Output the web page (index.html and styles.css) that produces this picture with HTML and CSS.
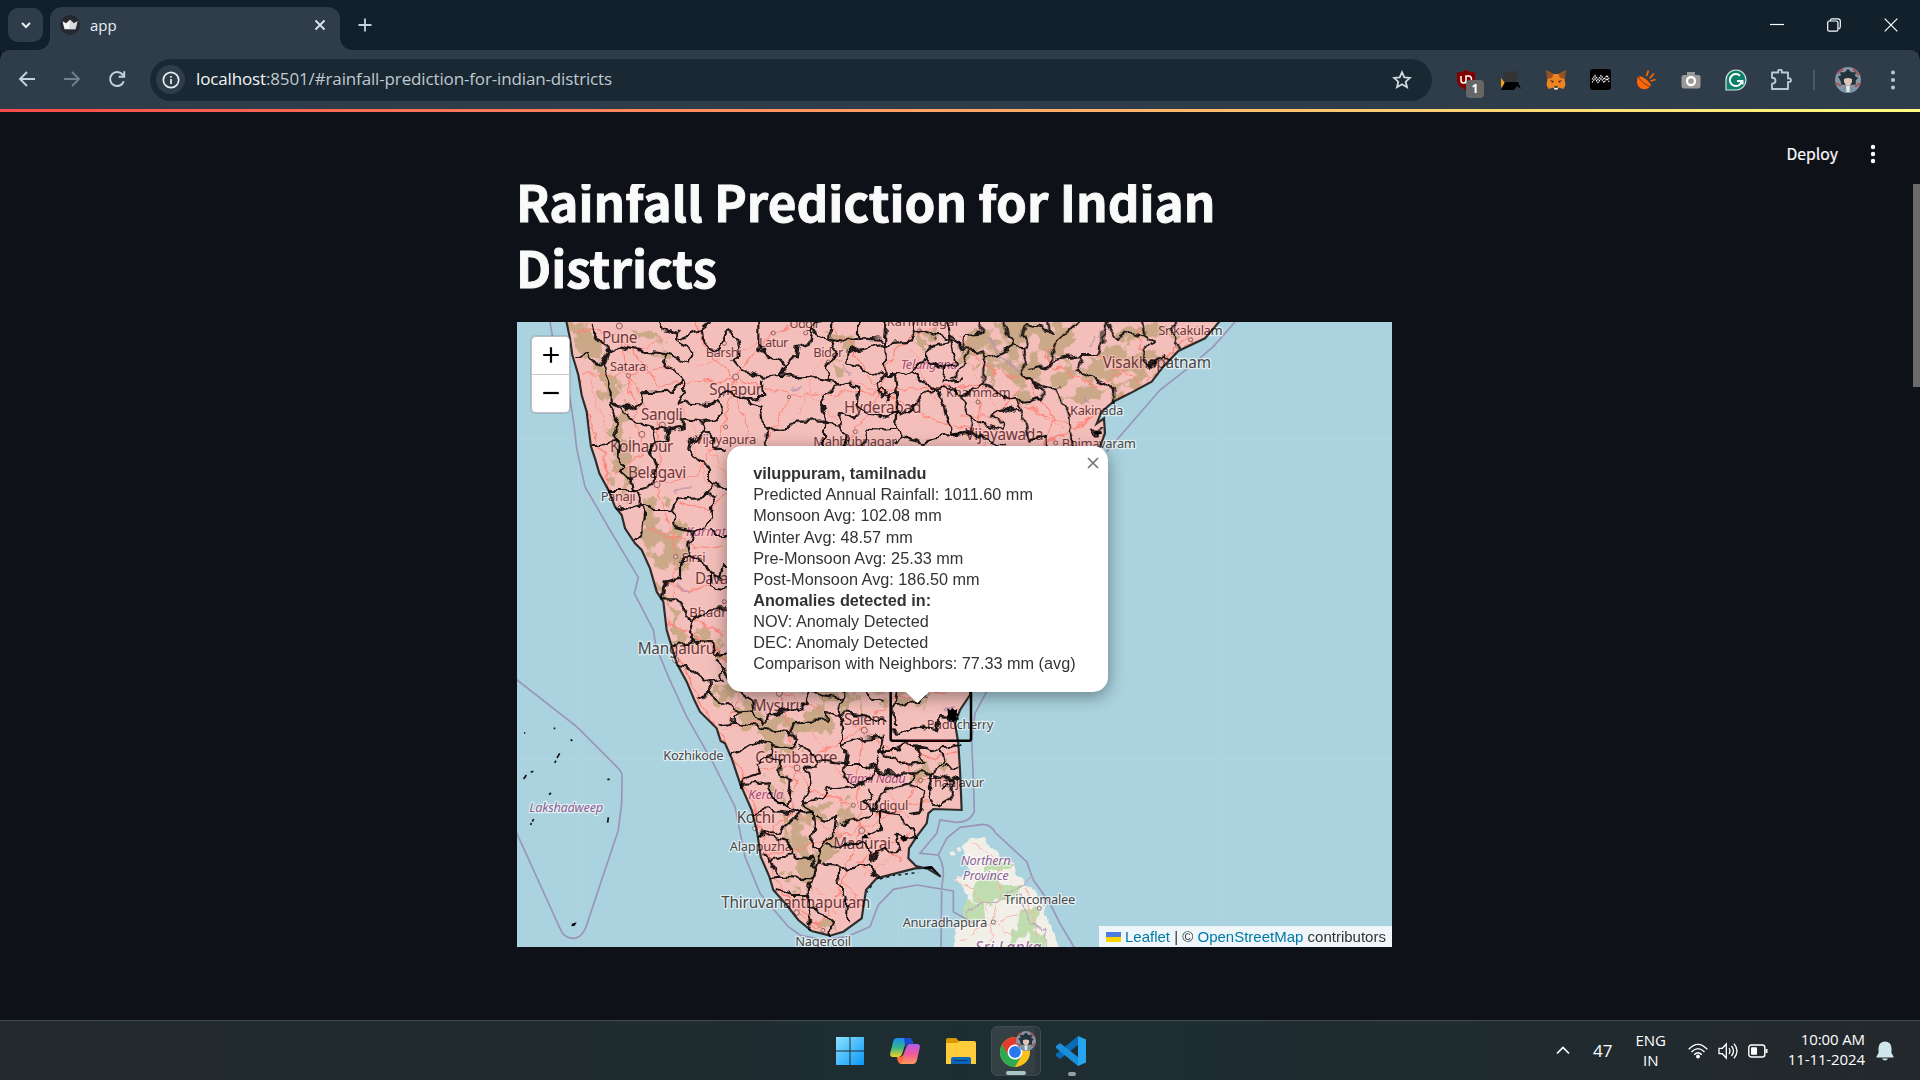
FILE: index.html
```html
<!DOCTYPE html>
<html lang="en">
<head>
<meta charset="utf-8">
<title>app</title>
<link rel="stylesheet" href="styles.css">
</head>
<body>
<div class="screen">
  <div class="tabstrip">
    <div class="tab-search"><svg width="12" height="8" viewBox="0 0 12 8"><path d="M2 2l4 4 4-4" fill="none" stroke="#e8eef2" stroke-width="2"/></svg></div>
    <div class="tab">
      <svg class="favicon" width="20" height="20" viewBox="0 0 20 20"><circle cx="10" cy="10" r="10" fill="#262730"/><path d="M2.500 6.200l3.600 2L10 4.800l3.900 3.400 3.600-2-2 8H4.500z" fill="#f4f4f4"/><path d="M10 4.800l3.900 3.400 3.600-2-2 8H9z" fill="#bdbdbd" opacity=".5"/></svg>
      <span class="tab-name">app</span>
      <svg width="12" height="12" viewBox="0 0 12 12"><path d="M1.500 1.500l9 9M10.500 1.500l-9 9" stroke="#dfe7ec" stroke-width="1.800"/></svg>
    </div>
    <svg class="newtab" width="14" height="14" viewBox="0 0 14 14"><path d="M7 .5v13M.5 7h13" stroke="#c3d3df" stroke-width="1.800"/></svg>
    <div class="wincontrols">
      <svg width="14" height="14" viewBox="0 0 14 14"><path d="M0 6.500h14" stroke="#fff" stroke-width="1.200"/></svg>
      <svg width="14" height="14" viewBox="0 0 14 14"><g fill="none" stroke="#fff" stroke-width="1.200"><rect x=".7" y="3" width="10.200" height="10.200" rx="1.500"/><path d="M3.200 3V2.500Q3.500.8 5 .8h6q2.300 0 2.300 2.300v5.500q0 2-1.800 2.300"/></g></svg>
      <svg width="14" height="14" viewBox="0 0 14 14"><path d="M.7.7l12.600 12.600M13.300.7L.7 13.300" stroke="#fff" stroke-width="1.200"/></svg>
    </div>
  </div>

  <div class="toolbar">
    <div class="nav">
      <svg width="18" height="18" viewBox="0 0 18 18"><path d="M17 9H3M9 2L2 9l7 7" fill="none" stroke="#c3d3df" stroke-width="1.900"/></svg>
      <svg width="18" height="18" viewBox="0 0 18 18"><path d="M1 9h14M9 2l7 7-7 7" fill="none" stroke="#71808c" stroke-width="1.900"/></svg>
      <svg width="18" height="18" viewBox="0 0 18 18"><path d="M15.800 11.200A7 7 0 1 1 14.500 4.500L16 6" fill="none" stroke="#c3d3df" stroke-width="2"/><path d="M16.200 1.200v5.600h-5.600" fill="none" stroke="#c3d3df" stroke-width="2"/></svg>
    </div>
    <div class="omnibox">
      <span class="siteinfo"><svg width="18" height="18" viewBox="0 0 18 18"><circle cx="9" cy="9" r="7.700" fill="none" stroke="#e8eef2" stroke-width="1.700"/><path d="M9 8v5M9 5v1.700" stroke="#e8eef2" stroke-width="1.700"/></svg></span>
      <span class="url"><b>localhost</b>:8501/#rainfall-prediction-for-indian-districts</span>
      <svg class="star" width="20" height="20" viewBox="0 0 20 20"><path d="M10 2.200l2.300 5.200 5.700.5-4.300 3.800 1.300 5.500-5-3-5 3 1.300-5.500L2 7.900l5.700-.5z" fill="none" stroke="#d0dae1" stroke-width="1.800"/></svg>
    </div>
    <div class="extensions">
      <div class="ext"><svg width="20" height="20" viewBox="0 0 20 20"><path d="M10 0q4 2.500 9 2.500v8q0 6-9 9.500-9-3.500-9-9.500v-8Q6 2.500 10 0z" fill="#800000"/><path d="M5 6v4.500q0 2.500 2.500 2.500T10 10.500V6M10 13V6h2.500q3 0 3 3.500T12.500 13z" fill="none" stroke="#fff" stroke-width="1.500"/></svg><span class="badge">1</span></div>
      <div class="ext"><svg width="22" height="20" viewBox="0 0 22 20"><path d="M3 4q7-4 10-1l4-2.500 2 1-3 3 2 3-2 4H4z" fill="#333"/><path d="M1 8l4 5-4 5z" fill="#f9a01b"/><path d="M5 12h13l3 7-4-3-3 4H1z" fill="#000"/></svg></div>
      <div class="ext"><svg width="20" height="20" viewBox="0 0 20 20"><path d="M.5.500L7.500 4h5l7-3.500L18.500 9l1 6-2 4-5-1.500-1 2h-3l-1-2-5 1.500-2-4 1-6z" fill="#ee8322"/><path d="M.5.500L7.500 4 6 8 1 9zM19.500.5L12.500 4 14 8l5 1z" fill="#98501f"/><path d="M4 10l4 1-1.500 2zM16 10l-4 1 1.500 2z" fill="#5b2d18"/><path d="M7.500 17h5l-1 2.500h-3z" fill="#eee"/><path d="M8.500 16.200h3l.5 1.500H8z" fill="#222"/></svg></div>
      <div class="ext"><svg width="21" height="21" viewBox="0 0 21 21"><rect width="21" height="21" rx="3" fill="#000"/><path d="M2 10.500l3-4 3 4 3-4 3 4 3-4 2.500 4M2 13.500l3-4 3 4 3-4 3 4 3-4 2.500 4" fill="none" stroke="#fff" stroke-width="1.100" stroke-dasharray="1.600 .7"/></svg></div>
      <div class="ext"><svg width="20" height="20" viewBox="0 0 20 20"><path d="M2 6q-3 9 3 12.500 6 2.500 11-4Q7 15 2 6z" fill="#ff6500"/><ellipse cx="9" cy="11" rx="2.300" ry="8" transform="rotate(-51 9 11)" fill="#ff6500" stroke="#2e3d49" stroke-width=".8"/><path d="M10.500 6l2-5.500M13.500 8.500l4.500-5M14.500 11l5-1.500" stroke="#ff6500" stroke-width="1.800"/></svg></div>
      <div class="ext"><svg width="20" height="20" viewBox="0 0 20 20"><path d="M2.500 5H6V2h8v3h3.500q2 0 2 2v9q0 2.500-2 2.500h-15q-2 0-2-2.500V7q0-2 2-2z" fill="#999"/><circle cx="10" cy="11" r="4" fill="#999" stroke="#fff" stroke-width="2.300"/></svg></div>
      <div class="ext"><svg width="22" height="22" viewBox="0 0 22 22"><path d="M1 21V11a10 10 0 1 1 10 10z" fill="#0c8068" stroke="#d5e5e1" stroke-width="1.200"/><path d="M15 6.700A6 6 0 1 0 16.800 12H12" fill="none" stroke="#fff" stroke-width="2"/><path d="M14.500 12h3.300v3.500" fill="none" stroke="#fff" stroke-width="1.500"/></svg></div>
      <div class="ext"><svg width="22" height="22" viewBox="0 0 22 22"><path d="M2 3.500h6.300q-.8-2.800 1.700-2.800t1.700 2.800H18v6q3-.5 3 1.700t-3 1.700V20H2v-5.300q3.500-.2 3.500-3T2 8.700z" fill="none" stroke="#b7c8d8" stroke-width="1.900" stroke-linejoin="round"/></svg></div>
    </div>
    <span class="sep"></span>
    <svg class="avatar" width="26" height="26" viewBox="0 0 26 26"><use href="#face"/></svg>
    <svg width="6" height="20" viewBox="0 0 6 20" fill="#b7c8d8"><circle cx="3" cy="2.500" r="2"/><circle cx="3" cy="10" r="2"/><circle cx="3" cy="17.500" r="2"/></svg>
  </div>

  <div class="page">
    <div class="decoration"></div>
    <div class="appheader">
      <span>Deploy</span>
      <svg width="6" height="20" viewBox="0 0 6 20" fill="#fafafa"><circle cx="3" cy="3" r="2.200"/><circle cx="3" cy="10" r="2.200"/><circle cx="3" cy="17" r="2.200"/></svg>
    </div>
    <div class="content">
      <div class="main">
        <h1>Rainfall Prediction for Indian Districts</h1>
        <div class="map">
          <svg class="tiles" width="875" height="625" viewBox="21 21 2625 1875">
            <defs>
              <filter id="jag" color-interpolation-filters="sRGB" filterUnits="userSpaceOnUse" x="0" y="0" width="2660" height="1910"><feTurbulence type="fractalNoise" baseFrequency=".028" numOctaves="2" seed="4"/><feDisplacementMap in="SourceGraphic" scale="36" xChannelSelector="R" yChannelSelector="G"/></filter>
              <filter id="rough" color-interpolation-filters="sRGB" filterUnits="userSpaceOnUse" x="0" y="0" width="2660" height="1910"><feTurbulence type="fractalNoise" baseFrequency=".022" numOctaves="4" seed="9" result="n"/><feDisplacementMap in="SourceGraphic" in2="n" scale="80" xChannelSelector="R" yChannelSelector="G" result="d"/><feTurbulence type="fractalNoise" baseFrequency=".016" numOctaves="4" seed="21"/><feColorMatrix values="0 0 0 0 0 0 0 0 0 0 0 0 0 0 0 14 0 0 0 -5.900" result="m"/><feComposite in="d" in2="m" operator="in"/></filter>
              <path id="land" d="M165 0L180 70 187 120 205 180 215 240 230 290 237 350 243 395 255 430 268 475 295 525 315 575 335 600 345 640 375 685 395 705 420 760 440 830 460 860 470 945 485 995 500 1045 530 1100 553 1155 570 1190 620 1240 632 1278 645 1285 665 1330 690 1405 725 1485 742 1555 752 1625 778 1685 790 1725 830 1770 865 1815 905 1848 960 1862 1000 1850 1055 1810 1062 1765 1068 1725 1100 1690 1215 1660 1265 1657 1292 1685 1255 1662 1218 1653 1195 1630 1197 1600 1220 1565 1250 1525 1255 1495 1270 1482 1355 1485 1350 1365 1345 1285 1335 1225 1350 1185 1380 1140 1400 900 1500 600 1770 395 1785 355 1782 310 1760 326 1775 290 1810 260 1860 235 1925 200 1960 155 2005 108 2085 70 2145 0z"/>
              <clipPath id="landclip"><use href="#land"/></clipPath>
            </defs>
            <rect width="2700" height="1950" fill="#aad3df"/>
            <path d="M206 0V1950M1165 1100V1950M2125 0V1950M0 370H2700M0 1330H2700" stroke="#b5d6dd" stroke-width="3"/>
            <use href="#land" fill="#f2efe9"/>
            <g clip-path="url(#landclip)">
              <g fill="#bdd3aa" filter="url(#rough)">
                <path d="M170 20H240L300 130 270 160 200 90zM250 130L330 180 350 320 370 480 350 560 310 480 290 300zM360 40h40l90 90-20 10zM330 180l60 20-40 30zM400 500l70 60-10 40-60-20z"/>
                <path d="M390 575L500 590 540 660 530 740 480 780 450 840 410 740 370 680 410 640z"/>
                <path d="M470 850L550 930 560 960 600 990 500 1000 480 920z"/>
                <path d="M540 940H660L700 1130 800 1200 870 1215 900 1160 1000 1150 1010 1190 980 1260 880 1270 860 1300 760 1290 680 1210 620 1160 600 1110 660 1090 620 990z"/>
                <path d="M880 1120L1120 1120 1130 1170 1010 1160 990 1220 940 1270 880 1260zM740 1290l120-10 10 30-90 10zM740 1360l80-10 30 150-60-60zM840 1480l80-10 120-10-20 60-100 10-40 30 20 60 60-60 10-20 20 30-70 110-20 80-20 20-10-60zM810 1500l100 20 0 110 10 60-60 40-60 10 10-50 50-30-20-70zM890 1790l60 10 20 50-60-20z"/>
                <path d="M1360 20h280l-70 110-110 60-50-60-60 20zM1420 120l130-30 60 90-40 100-120-80zM1490 80l80-60 120 10-20 130 70-10 120-130 110 0 60 110-60 50-110 30-10 60 70 60-120 60-40-110-90-30-20-110zM1580 190l120-60 70 10 10 150-60-60-110-20zM1860 40l80 0 0 90-40 60-70-60z"/>
                <path d="M1220 20l80 30-50 20zM1200 60l60 20-30 20zM1140 1100l130 0-20 80-60-10-50-20zM1190 1370l120-40-10 40-60 40zM1050 1170l60 40-20 20zM960 50l60 10 0 40-50-20zM970 120l60 20-20 60-50-50z"/>
              </g>
              <g fill="none" stroke="#ffa698" stroke-width="3.500" filter="url(#jag)">
                <path d="M210 40L330 60 450 210 670 190 840 240 1110 230 1400 210 1700 340 1780 280M330 60L350 180 450 330 440 510 500 700 480 860M190 150L230 300 280 420 300 540M670 190L640 340 560 480 440 510M670 190L580 90 560 21M670 190L790 50 900 21M670 190L720 380M840 240L760 390M1110 230L1020 100 960 21M1110 230L1150 110 1230 50 1350 21M1110 230L1040 350 980 390M1110 230L1280 320 1400 350M1400 210L1420 390M1600 390L1700 330 1900 210 2050 80M220 180L350 180 480 150M350 180L400 420 310 480M500 560L600 590 660 520M420 640L560 690 640 700M460 800L540 830 650 790M540 900L640 960"/>
                <path d="M470 920L620 1000 810 1130 860 1350 840 1500 760 1560M490 1000L590 1200 690 1360 740 1500 790 1680 860 1790 940 1850M810 1130L1060 1240 860 1350 740 1370M1060 1240L1040 1400 1055 1540 1000 1700 930 1830M1060 1240L1230 1390 1180 1480 1055 1540 1170 1640M1230 1390L1350 1400M1055 1540L880 1600 750 1620M1020 1470L900 1430 860 1350M1060 1240L1150 1150 1340 1120M1160 1270L1260 1330 1340 1310M1000 1700L1060 1780M1100 1500L1250 1460M1200 1560L1040 1640 1110 1690M620 1000L700 1120 660 1220M930 1830L830 1740"/>
                <path d="M1350 60L1430 160 1550 200 1640 310 1600 390M1690 30L1600 130 1750 220 1900 130 1880 30M1530 230L1450 300 1350 300M1880 200L1760 110M1940 150L2060 40"/>
              </g>
              <g fill="none" stroke="#aab9dc" stroke-width="6" opacity=".8" filter="url(#jag)"><path d="M1000 150l15 35M840 222l35-6M1440 70l30 50 60 50M1740 100l20-40M1720 240l20 20M490 535l50-15M500 805l40 30M770 1190l40 20M1300 1180l40 0"/></g>
              <g fill="none" stroke="#ffc4b9" stroke-width="3" filter="url(#jag)"><path d="M500 270L650 480M940 130L860 300M1200 100L1280 260M1110 230L1020 200M1550 260L1700 380M870 1500L1000 1560M920 1720L980 1800M560 160L760 80M380 110L480 60M240 200L300 380M540 360L600 520M880 230L1000 330M1360 120L1480 320M640 1240L760 1220M1060 1680L1180 1600M1100 1380L1200 1520M900 1240L1000 1390"/></g>
            </g>
            <g fill="#f2efe9">
              <path filter="url(#jag)" d="M1350 1592L1380 1570 1420 1565 1460 1610 1505 1640 1530 1695 1575 1730 1605 1785 1625 1840 1655 1920 1330 1920 1335 1850 1365 1795 1375 1740 1340 1690 1380 1670 1370 1615z"/>
              <path d="M1318 1612l12-3 8 10-14 4zM1330 1695l20-6 20 14-16 2zM1340 1600l10-5 4 12-10 3z"/>
            </g>
            <g fill="#c0ddb0" filter="url(#jag)"><path d="M1395 1695l60-15 20 30 60 0-20 50-60-10-10 30-60-20zM1365 1760l50 10 10 40-50 20-20-20zM1530 1785l50-10 10 30-50 70-20-10zM1560 1840l50 20-10 50-40-20zM1430 1640l80 5-20 20-70 0zM1510 1840l20 10-20 60-20-10z"/></g>
            <g fill="none" stroke="#f8b3a5" stroke-width="3" filter="url(#jag)"><path d="M1390 1590L1460 1640 1470 1740 1450 1822 1520 1870M1330 1690L1400 1730 1450 1822 1350 1880M1450 1822L1590 1780M1450 1822L1440 1900M1550 1720L1580 1860"/></g>
            <g fill="none" stroke="#9a95b8" stroke-width="5">
              <path d="M120 21L130 80 180 250 192 330 200 400 225 515 300 645 385 788 373 835 430 945 438 995 475 1085 530 1205 610 1345 675 1475 705 1625 750 1735 835 1835 870 1860 940 1875 1010 1865 1080 1835 1105 1770 1150 1723 1220 1710 1330 1728 1330 1790 1400 1830"/>
              <path d="M0 1078L21 1095 200 1235 325 1360Q338 1372 336 1390L335 1465 325 1545 235 1815Q220 1870 190 1870T150 1840L0 1510"/>
              <path d="M2175 21L2110 95 2040 155 1950 225 1820 375 1790 410M1430 1130L1395 1195 1385 1275 1390 1395 1393 1490Q1380 1522 1340 1522L1290 1515 1280 1555 1230 1615 1285 1620Q1302 1650 1300 1680L1295 1720M1285 1620L1310 1570 1350 1537 1420 1528Q1445 1530 1458 1555L1550 1640 1570 1695 1620 1765 1650 1825 1700 1910M1295 1728L1293 1900"/>
              <path d="M1570 1690L1450 1770 1400 1770 1370 1800M1530 1740L1560 1820 1600 1840 1620 1920" stroke="#b9a9be" stroke-width="4" filter="url(#jag)"/>
            </g>
            <g class="dots">
              <circle cx="328" cy="33" r="9"/><circle cx="355" cy="182" r="6"/><circle cx="643" cy="85" r="6"/><circle cx="790" cy="54" r="6"/><circle cx="887" cy="54" r="6"/><circle cx="677" cy="186" r="9"/><circle cx="955" cy="141" r="6"/><circle cx="457" cy="330" r="9"/><circle cx="396" cy="358" r="9"/><circle cx="647" cy="336" r="6"/><circle cx="837" cy="246" r="5"/><circle cx="1036" cy="350" r="6"/><circle cx="1228" cy="48" r="6"/><circle cx="441" cy="509" r="9"/><circle cx="497" cy="725" r="6"/><circle cx="643" cy="860" r="6"/><circle cx="1404" cy="261" r="6"/><circle cx="1637" cy="384" r="6"/><circle cx="2042" cy="74" r="6"/><circle cx="497" cy="1035" r="9"/><circle cx="808" cy="1135" r="9"/><circle cx="1063" cy="1246" r="9"/><circle cx="861" cy="1359" r="9"/><circle cx="1232" cy="1396" r="6"/><circle cx="1030" cy="1471" r="6"/><circle cx="1055" cy="1547" r="9"/><circle cx="735" cy="1540" r="7"/><circle cx="860" cy="1793" r="8"/><circle cx="939" cy="1846" r="6"/><circle cx="1588" cy="1780" r="6"/><circle cx="1450" cy="1821" r="6"/>
            </g>
            <g class="labels">
              <text x="276" y="84" textLength="106" class="big">Pune</text>
              <text x="300" y="168" textLength="109">Satara</text>
              <text x="587" y="126" textLength="108">Barshi</text>
              <text x="747" y="96" textLength="88">Latur</text>
              <text x="838" y="40" textLength="92">Udgir</text>
              <text x="910" y="126" textLength="90">Bidar</text>
              <text x="598" y="240" textLength="158" class="big">Solapur</text>
              <text x="393" y="314" textLength="125" class="big">Sangli</text>
              <text x="300" y="411" textLength="190" class="big">Kolhapur</text>
              <text x="354" y="489" textLength="175" class="big">Belagavi</text>
              <text x="555" y="388" textLength="184">Vijayapura</text>
              <text x="1002" y="294" textLength="232" class="big">Hyderabad</text>
              <text x="910" y="394" textLength="250">Mahbubnagar</text>
              <text x="1130" y="33" textLength="220">Karimnagar</text>
              <text x="272" y="558" textLength="105">Panaji</text>
              <text x="515" y="740" textLength="72">Sirsi</text>
              <text x="555" y="808" textLength="235" class="big">Davanagere</text>
              <text x="538" y="906" textLength="200">Bhadravati</text>
              <text x="1308" y="246" textLength="194">Khammam</text>
              <text x="1366" y="374" textLength="235" class="big">Vijayawada</text>
              <text x="1655" y="400" textLength="223">Bhimavaram</text>
              <text x="1680" y="301" textLength="160">Kakinada</text>
              <text x="1778" y="158" textLength="325" class="big">Visakhapatnam</text>
              <text x="1945" y="59" textLength="193">Srikakulam</text>
              <text x="383" y="1017" textLength="233" class="big">Mangaluru</text>
              <text x="728" y="1188" textLength="157" class="big">Mysuru</text>
              <text x="1002" y="1230" textLength="125" class="big">Salem</text>
              <text x="1250" y="1243" textLength="200">Puducherry</text>
              <text x="460" y="1334" textLength="181">Kozhikode</text>
              <text x="736" y="1343" textLength="246" class="big">Coimbatore</text>
              <text x="1252" y="1417" textLength="170">Thanjavur</text>
              <text x="1047" y="1486" textLength="148">Dindigul</text>
              <text x="680" y="1523" textLength="115" class="big">Kochi</text>
              <text x="659" y="1608" textLength="187">Alappuzha</text>
              <text x="970" y="1602" textLength="173" class="big">Madurai</text>
              <text x="634" y="1779" textLength="447" class="big">Thiruvananthapuram</text>
              <text x="856" y="1893" textLength="167">Nagercoil</text>
              <text x="1482" y="1766" textLength="214">Trincomalee</text>
              <text x="1178" y="1837" textLength="254">Anuradhapura</text>
            </g>
            <g class="labels region">
              <text x="1172" y="162" textLength="171">Telangana</text>
              <text x="528" y="664" textLength="185">Karnataka</text>
              <text x="715" y="1452" textLength="105">Kerala</text>
              <text x="1005" y="1405" textLength="182">Tamil Nadu</text>
              <text x="58" y="1490" textLength="222">Lakshadweep</text>
              <text x="1352" y="1651" textLength="150">Northern</text>
              <text x="1358" y="1695" textLength="138">Province</text>
              <text x="1396" y="1914" textLength="198" class="big">Sri Lanka</text>
            </g>
            <use href="#land" fill="#f00" fill-opacity=".2" stroke="#000" stroke-opacity=".78" stroke-width="6.500"/>
            <g class="borders" filter="url(#jag)">
              <path d="M245 21L250 60 275 90 295 110 285 140 290 180 305 230 305 270 325 310 310 345 330 385 325 420 340 450 330 470 365 500 370 530M190 128L235 120 255 145 280 150 290 115 330 95 410 110 470 118 535 140 550 105 495 75 575 45 600 25M450 15L455 40 505 55 495 75M575 45L580 80 610 110 640 75 655 50 680 70 690 110 670 135 700 170 755 185 815 180 830 150 745 105 745 10M470 120L460 150 500 165 515 195 525 235 500 270 530 265 600 270 635 250 635 310 580 320 515 310 515 340 470 350 430 335 385 325 305 260 370 285 400 270 400 235 490 230 510 190"/>
              <path d="M630 235L660 240 710 250 760 245 755 195M710 250L730 270 755 275 760 320 770 350 770 400M815 180L900 190 985 205 950 240 930 270 945 310 945 400M770 350L830 335 850 320 945 320M830 150L855 130 860 90 900 80 910 40 935 10M910 50L960 75 975 110 955 150 950 200M965 10L960 75 1000 80 1050 70 1125 75 1130 10M1125 75L1130 180 1060 165 1010 140 1020 110 1080 95 1125 85M985 205L1020 200 1045 225 1040 270 1060 300 1120 310 1165 290M945 320L985 330 990 300 1045 305M1130 180L1100 200 1105 235 1130 250 1160 235 1155 180zM1160 235L1165 290 1160 340 1110 345 1070 340 1060 400M1160 340L1170 360 1150 390M985 330L1010 365 1000 400M1105 225l20 -8 8 20 -18 10z"/>
              <path d="M1160 180L1205 160 1240 200 1275 215 1300 270 1325 360M1165 290L1200 295 1240 240 1280 220 1350 230M1130 85L1210 80 1205 45 1310 70 1350 95M1205 45L1210 10M1255 95L1250 130 1300 160 1295 205 1350 190M1250 130L1205 160M1170 360L1240 385 1325 360 1350 355M1310 10L1320 80 1340 150 1300 160M1255 95L1320 80M1050 10L1050 70"/>
              <path d="M245 390L275 390 330 370M430 335L440 380 415 400 435 450 430 510 370 525M470 350L470 375 440 380M580 320L590 350 540 380 535 400 560 430 600 465 600 510 650 515M590 350L610 370 610 400 650 410M295 525L370 525 395 545 395 570 345 585 320 575M395 570L430 585 480 585 500 550 545 545 620 540 605 570 610 610 585 640 545 650 500 640 495 600 480 585M395 570L405 600 400 650 375 675M600 510L585 545M545 650L535 690 540 720 510 750 510 790 465 800 455 850 500 850 530 900 550 920 600 880 650 880M600 640L620 660 670 660M540 720L580 735 600 775 630 785 640 750 670 750M600 775L600 810 670 825M550 920L540 960 560 980 610 985 620 1020 670 1005"/>
              <path transform="translate(1320)" d="M100 10L95 55 45 60 35 105 95 110 105 130 100 165 100 210 35 240 0 215M35 105L0 60M55 110L50 150 0 190M150 10L190 80 185 100 105 130M190 95L220 100 235 85 215 60 225 30 300 45 290 10M220 100L230 155 210 185 280 215 320 220 340 260 355 300 360 345 375 400M240 165L295 155 315 130 400 120 440 120 460 90 460 50 470 10M295 155L320 80 390 15M400 120L385 170 430 190 495 220 490 260M470 30L500 75 540 50 580 60 610 80 580 110 595 150 640 120 655 140M580 10L590 60M670 10L675 70 690 105M100 205L140 235 205 260 280 245 280 225 215 190M205 260L215 290 160 280 120 300 155 320 155 345 100 325 65 305 40 260 30 240M215 290L225 330 235 380 290 365 290 400M65 305L60 350 0 360M60 350L110 375 160 395M420 350l30 0 0 8 -25 0z"/>
            </g>
            <g class="borders" filter="url(#jag)" transform="translate(0 945)">
              <path d="M485 45L555 40M620 75L635 110 630 150 595 155 545 115 500 105M595 155L600 190 555 210M600 190L640 225 690 245 725 240 720 205 660 160 635 115M690 250L660 285 620 290M660 270L735 290 770 300M725 240L765 285 790 250 850 240 890 215 900 190 940 200 1000 205 1000 170M1000 205L985 250 1000 300 990 345 1045 330 1115 320 1110 360 1150 360 1190 340M900 190L890 150M1050 170L1080 200 1130 210M770 300L840 310 865 330 850 355 790 345 735 335 720 340 665 380M840 310L850 280 890 275 945 275 950 250 1000 250 1060 255 1130 270M790 345L780 380 740 400 750 430 705 445 690 465M865 350L900 360 920 390 1005 400 1010 370 990 345M780 380L815 390 810 430 845 455 835 530 775 490 775 460 690 465M725 553L770 538 870 550 840 580 810 605 742 612"/>
              <path d="M920 390L890 420 910 460 890 490 880 530 905 545 910 600 900 650 930 665 980 600 985 560 950 570 915 560M1005 400L1000 440 1040 470 950 480 930 510 885 520M1040 470L1080 450 1110 370M1000 405L1070 405 1110 430 1205 430 1200 460 1120 480 1110 500 1095 540 1070 560 990 580M1080 470L1090 510 1060 520 1110 545 1170 560 1200 595 1225 615M1120 350L1160 400 1240 395 1215 350 1190 345M1200 465L1240 480 1230 550 1200 555M1205 430L1260 430 1300 400 1290 360 1345 345M1215 350L1290 360M1260 430L1265 500 1290 530 1325 510 1325 450 1270 435M1300 410L1345 415M1325 450L1345 440M1290 480l30 -20"/>
              <path d="M742 612L790 620 830 630 850 675 780 690 755 675M780 690L785 710 810 740 780 745M850 680L905 685 915 720 905 745 810 740M905 745L895 790 905 830 895 870 900 900M800 780L850 795 900 795M930 665L915 720M930 690L985 715 1040 710 1085 700 1090 735 1105 745M1085 685L1130 660 1170 655 1155 620 1185 625 1225 610M985 715L990 770 1010 800 1005 860 1020 880M900 830L940 850 965 880 960 915M950 650L1060 640 1090 670 1080 690M1060 625L1110 600 1110 545M770 490L835 530 870 550 910 545M1150 230L1230 215 1250 190 1260 170M1150 300L1190 310 1230 290 1280 300 1290 260 1340 270M1160 190L1150 250 1160 290"/>
            </g>
            <path d="M1312 1180l10 6 4-8 8 8 8-4-2 12 6 6-8 4 4 10-8 2-2 8-8-8-8 6 0-12-6-4 4-8zM1055 1570l10-14 12 14zM1170 1568l14-8 8 16-12 4zM1240 1657l24-4 26 30-24-20-24-2zM186 1826l14-4-6 10-10 2zM1750 352l24-4 2 8-20 4z" fill="#000"/>
            <path d="M149 1315l-8 14M138 1337l-4 6M49 1380l-8 12M62 1372l8-3M182 1273l5 5M295 1507l-2 16M292 1393h7M123 1434l-6 5M71 1512l-4 8M64 1524l-2 6M42 1254h4M131 1240h5" stroke="#111" stroke-width="5"/>
            <path d="M1110 1692l45-12M1165 1680l60-8M1085 1712l-14 20" stroke="#111" stroke-width="4" stroke-dasharray="9 11"/>
            <rect x="1142" y="1060" width="241" height="217" rx="6" fill="none" stroke="#000" stroke-width="7.500" stroke-linejoin="round"/>
            <path d="M1195 1277h120" stroke="#4d000c" stroke-width="4"/>
          </svg>
          <div class="zoomctl"><span><svg width="18" height="18" viewBox="0 0 18 18"><path d="M9 1.200v15.600M1.200 9h15.600" stroke="#000" stroke-width="2.200"/></svg></span><span><svg width="18" height="18" viewBox="0 0 18 18"><path d="M1.200 9h15.600" stroke="#000" stroke-width="2.200"/></svg></span></div>
          <div class="popup">
            <svg class="close" width="12" height="12" viewBox="0 0 12 12"><path d="M1 1l10 10M11 1L1 11" stroke="#757575" stroke-width="1.700"/></svg>
            <b>viluppuram, tamilnadu</b><br>
            Predicted Annual Rainfall: 1011.60 mm<br>
            Monsoon Avg: 102.08 mm<br>
            Winter Avg: 48.57 mm<br>
            Pre-Monsoon Avg: 25.33 mm<br>
            Post-Monsoon Avg: 186.50 mm<br>
            <b>Anomalies detected in:</b><br>
            NOV: Anomaly Detected<br>
            DEC: Anomaly Detected<br>
            Comparison with Neighbors: 77.33 mm (avg)
            <svg class="tip" width="25" height="13" viewBox="0 0 25 13"><path d="M0 0h25L12.500 12z" fill="#fff"/></svg>
          </div>
          <div class="attribution"><svg width="15" height="10" viewBox="0 0 15 10"><path fill="#4c7be1" d="M0 0h15v5H0z"/><path fill="#ffd500" d="M0 5h15v5H0z"/></svg><span><a>Leaflet</a> | © <a>OpenStreetMap</a> contributors</span></div>
        </div>
      </div>
      <div class="scrollthumb"></div>
    </div>
  </div>

  <div class="taskbar">
    <div class="apps">
      <div class="app"><svg width="30" height="30" viewBox="0 0 30 30"><defs><linearGradient id="win" x1="0" y1="0" x2="1" y2="1"><stop offset="0" stop-color="#8be3ff"/><stop offset="1" stop-color="#0a96f5"/></linearGradient></defs><path d="M1 1h13.500v13.500H1zM15.500 1H29v13.500H15.500zM1 15.500h13.500V29H1zM15.500 15.500H29V29H15.500z" fill="url(#win)"/></svg></div>
      <div class="app"><svg width="32" height="30" viewBox="0 0 32 30"><defs><linearGradient id="c1" x1="0" y1="0" x2="0" y2="1"><stop offset="0" stop-color="#1d8df0"/><stop offset=".5" stop-color="#35b38b"/><stop offset="1" stop-color="#f5d31e"/></linearGradient><linearGradient id="c2" x1="0" y1="0" x2="0" y2="1"><stop offset="0" stop-color="#b05cf0"/><stop offset=".5" stop-color="#f05a9a"/><stop offset="1" stop-color="#ff9a5a"/></linearGradient></defs><path d="M8 2h12q3 0 4 6h-5q-3 0-4 4l-2 6q-1 3-4 3H4q-4 0-2.500-5L4 6q1-4 4-4z" fill="url(#c1)"/><path d="M15 2h5q3 0 4 6h-5q-2 0-3 2z" fill="#194bd0"/><path d="M24 28H12q-3 0-4-7h3q3 0 4-4l2-5q1-4 4-4h7q4 0 2.500 5L28 24q-1 4-4 4z" fill="url(#c2)"/><path d="M8 21h3q3 0 4-2l-2 8q-4 1-5-6z" fill="#ff6b38"/></svg></div>
      <div class="app"><svg width="30" height="28" viewBox="0 0 30 28"><path d="M0 3q0-2 2-2h8l3 3h13v8H0z" fill="#d99800"/><path d="M0 6h11l3-2h14q2 0 2 2v21H0z" fill="#ffcd3c"/><path d="M5 27v-5q0-2 2-2h16q2 0 2 2v5z" fill="#0a66b8"/><path d="M8 23.500h14" stroke="#073f7a" stroke-width="1.200"/></svg></div>
      <div class="app active"><svg width="40" height="40" viewBox="0 0 40 40"><g transform="translate(4 8)"><circle cx="15" cy="15" r="15" fill="#fbc116"/><path d="M2 7.500A15 15 0 0 0 15 30l6.500-11.300L15 15z" fill="#2da94f"/><path d="M28 7.500H15l-6.500 11L2 7.500A15 15 0 0 1 28 7.500z" fill="#e33b2e"/><circle cx="15" cy="15" r="7.500" fill="#fff"/><circle cx="15" cy="15" r="5.900" fill="#2a78ef"/></g><svg x="20" y="2" width="20" height="20" viewBox="0 0 26 26"><g id="face"><circle cx="13" cy="13" r="13" fill="#8796a2"/><path d="M2 6L8 2M18 2l6 6M1 16l5 3M20 20l5-4" stroke="#a9525c" stroke-width="2"/><path d="M4 10l3-1-1-3 4 0 3-3 3 3 4 0-1 3 3 2-2 2 0 4H7l-1-4z" fill="#21343d" stroke="#21343d" stroke-width="1.500"/><path d="M9 12q4-2 8 0v3q-1 3-4 4-3-1-4-4z" fill="#e2c4b8"/><path d="M6 24q1-5 7-5t7 5q-7 4-14 0z" fill="#7695a9"/><path d="M11 19h4l-.5 6h-3z" fill="#e8e4df"/></g></svg></svg><i></i></div>
      <div class="app code"><svg width="30" height="30" viewBox="0 0 30 30"><path d="M22 0l8 3.500v23L22 30z" fill="#27a4ef"/><path d="M22 0v9L4 23l-4-3v-2z" fill="#0b6cb5"/><path d="M22 30v-9L4 7 0 10v2z" fill="#1a8ed8"/></svg><i></i></div>
    </div>
    <div class="tray">
      <svg class="chev" width="14" height="9" viewBox="0 0 14 9"><path d="M1 7.500l6-6 6 6" fill="none" stroke="#fff" stroke-width="1.600"/></svg>
      <span class="temp">47</span>
      <span class="lang">ENG<br>IN</span>
      <svg width="20" height="16" viewBox="0 0 20 16"><g fill="none" stroke="#fff" stroke-width="1.400"><path d="M.7 6.300Q10-3.500 19.300 6.300M3.500 9Q10 2.200 16.500 9M6.200 11.700q3.800-3.800 7.600 0"/></g><circle cx="10" cy="13.500" r="1.900" fill="#fff"/></svg>
      <svg width="20" height="18" viewBox="0 0 20 18"><g fill="none" stroke="#fff" stroke-width="1.300"><path d="M1 6.300h3.300L8.300 2v14l-4-4.300H1z"/><path d="M11 6q2 3 0 6M13.500 4q4 5 0 10M16 1.700q6 7.300 0 14.600"/></g></svg>
      <svg width="20" height="14" viewBox="0 0 20 14"><rect x=".8" y="1" width="16" height="12" rx="2.500" fill="none" stroke="#fff" stroke-width="1.400"/><rect x="3" y="3.200" width="6" height="7.600" rx="1" fill="#fff"/><path d="M17.500 5h2v4h-2z" fill="#fff"/></svg>
      <span class="clock">10:00 AM<br>11-11-2024</span>
      <svg class="bell" width="18" height="20" viewBox="0 0 18 20"><path d="M9 .5q6 0 6.500 6.500v5l2 3.500v1H.5v-1l2-3.500V7Q3 .5 9 .5z" fill="#cfe6ea"/><path d="M6 17.500h6q-1 2-3 2t-3-2z" fill="#cfe6ea"/></svg>
    </div>
  </div>
</div>
</body>
</html>
```
FILE: styles.css
```css
* { box-sizing: border-box; }
body { margin: 0; background: #0e1117; overflow: hidden; }
svg { display: block; flex: none; }
.screen { width: 1920px; height: 1080px; display: flex; flex-direction: column; font-family: "Open Sans", "Noto Sans", sans-serif; color: #e8eef2; }

.tabstrip { position: relative; z-index: 1; height: 50px; background: #11202b; display: flex; align-items: center; padding-left: 8px; flex: none; }
.tab-search { width: 35px; height: 34px; border-radius: 10px; background: #2e3d49; display: flex; align-items: center; justify-content: center; }
.tab { align-self: flex-end; width: 290px; height: 43px; margin-left: 7px; padding: 0 14px 7px 10px; border-radius: 12px 12px 0 0; background: #2e3d49; display: flex; align-items: center; position: relative; }
.tab::before, .tab::after { content: ""; position: absolute; bottom: 0; width: 12px; height: 12px; }
.tab::before { left: -12px; background: radial-gradient(circle at 0 0, transparent 11.500px, #2e3d49 12px); }
.tab::after { right: -12px; background: radial-gradient(circle at 100% 0, transparent 11.500px, #2e3d49 12px); }
.tab-name { font-size: 15px; margin-left: 10px; flex: 1; }
.newtab { margin-left: 18px; }
.wincontrols { margin-left: auto; display: flex; gap: 43px; padding-right: 22px; }

.toolbar { height: 59px; background: #2e3d49; border-radius: 10px 10px 0 0; box-shadow: 0 -12px 0 -1px #11202b; display: flex; align-items: center; flex: none; }
.nav { display: flex; gap: 27px; width: 150px; padding-left: 18px; }
.nav svg { margin-top: -1px; }
.omnibox { width: 1282px; height: 42px; border-radius: 21px; background: #192833; display: flex; align-items: center; padding: 0 20px 0 6px; }
.siteinfo { width: 29px; height: 29px; border-radius: 50%; background: #2e3d49; display: flex; align-items: center; justify-content: center; }
.url { flex: 1; margin: -2px 0 0 11px; font-size: 17px; letter-spacing: -.140px; color: #bfc9d0; }
.url b { font-weight: 400; color: #f2f6f8; }
.extensions { display: flex; margin-left: 11px; }
.ext { width: 45px; height: 40px; display: flex; align-items: center; justify-content: center; position: relative; }
.badge { position: absolute; left: 23px; top: 20px; width: 18px; height: 18px; border-radius: 4px; background: #666; color: #fff; font: 700 12px/18px "Open Sans", sans-serif; text-align: center; }
.sep { width: 2px; height: 20px; background: #4a5965; margin-left: 10px; }
.avatar { margin: 0 29px 0 20px; }

.page { height: 911px; display: flex; flex-direction: column; background: #0e1117; flex: none; }
.decoration { height: 3px; background: linear-gradient(90deg, #ff4b4b, #fffd80); flex: none; }
.appheader { height: 72px; display: flex; align-items: center; justify-content: flex-end; gap: 32px; padding: 12px 44px 0 0; font: 400 15.750px/24px "Noto Sans CJK SC", sans-serif; color: #fafafa; flex: none; }
.appheader span { margin-top: -1px; -webkit-text-stroke: .2px #fafafa; }
.content { flex: 1; overflow: hidden; display: flex; justify-content: space-between; padding-left: 517px; }
.main { width: 875px; }
h1 { margin: -16px 0 0 -1px; height: 154px; font: 700 49.400px/66px "Noto Sans CJK SC", sans-serif; color: #fafafa; -webkit-text-stroke: .900px #fafafa; }
.scrollthumb { width: 7px; height: 203px; background: #6b6b6b; }

.map { position: relative; width: 875px; height: 625px; overflow: hidden; font-family: "Liberation Sans", Arial, sans-serif; }
.labels { font-family: "Noto Sans", sans-serif; font-size: 39px; fill: #484848; stroke: #fff; stroke-opacity: .6; stroke-width: 8px; paint-order: stroke; stroke-linejoin: round; }
.labels .big { font-size: 46px; }
.labels.region { font-style: italic; fill: #8d6296; }
.dots { fill: #f2efe9; stroke: #777; stroke-width: 3px; }
.borders { fill: none; stroke: #000; stroke-opacity: .88; stroke-width: 6.500px; stroke-linejoin: round; }
.zoomctl { position: absolute; left: 14px; top: 14px; width: 39px; border: 1px solid rgba(0,0,0,.25); border-radius: 5px; background: #fff; display: flex; flex-direction: column; box-shadow: 0 0 0 1px rgba(0,0,0,.1); }
.zoomctl span { height: 37px; display: flex; align-items: center; justify-content: center; }
.zoomctl span svg { margin-top: -1px; }
.zoomctl span + span { border-top: 1px solid #ccc; height: 38px; }
.popup { position: absolute; left: 210px; top: 124px; width: 381px; height: 246px; padding: 17.200px 0 0 26.200px; border-radius: 15px; background: #fff; color: #333; font-size: 16.250px; line-height: 21.125px; white-space: nowrap; box-shadow: 0 4px 17px rgba(0,0,0,.4); }
.close { position: absolute; right: 9px; top: 11px; }
.tip { position: absolute; left: 178px; top: 245px; }
.attribution { position: absolute; right: 0; bottom: 0; height: 21px; width: 293px; padding-left: 7px; background: rgba(255,255,255,.8); color: #333; font-size: 15px; line-height: 21px; display: flex; align-items: center; gap: 4px; white-space: nowrap; }
.attribution a { color: #0078a8; }

.taskbar { height: 60px; border-top: 1px solid #444b4f; background: linear-gradient(90deg, #23292d, #1f2c30 35%, #1d2e33 50%, #1f2c30 75%, #23282c); display: flex; align-items: center; padding-left: 822px; flex: none; }
.apps { display: flex; }
.app { width: 55.500px; height: 50px; display: flex; align-items: center; justify-content: center; position: relative; }
.app.active { width: 50px; margin: 0 3px 0 2px; border-radius: 6px; background: #344044; border: 1px solid #3f4b50; box-shadow: inset -5px 0 0 #2c383c; }
.app.active svg { margin-top: -4px; }
.app i { position: absolute; bottom: 0; left: 14px; width: 20px; height: 4px; border-radius: 2px; background: #a9c4c9; }
.app.code i { left: 24px; width: 8px; background: #9a9fa1; }
.tray { margin-left: auto; padding-right: 26px; display: flex; align-items: center; color: #fff; font-size: 15px; line-height: 20px; }
.temp { font-size: 17px; margin: 0 23px 0 23px; }
.lang { text-align: center; margin: -2px 22px 0 0; }
.tray svg + svg { margin-left: 10px; }
.clock { text-align: right; margin: -4px 11px 0 18px; width: 79px; white-space: nowrap; letter-spacing: -.1px; }
```
